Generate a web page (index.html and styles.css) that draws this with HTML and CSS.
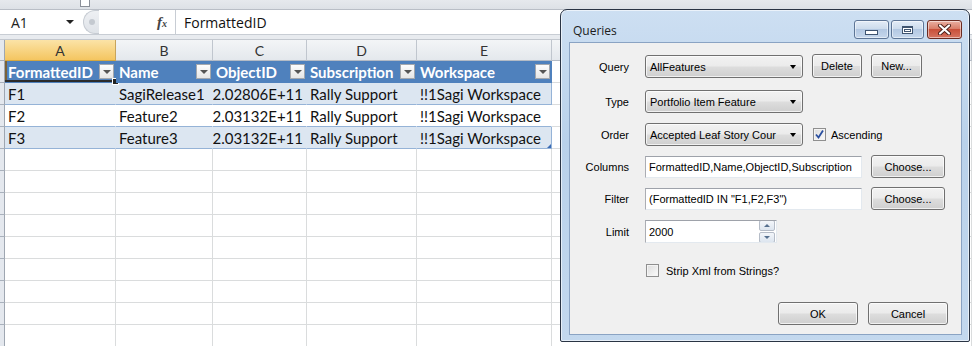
FILE: index.html
```html
<!DOCTYPE html>
<html lang="en">
<head>
  <meta charset="UTF-8" />
  <title>Queries</title>
  <link rel="stylesheet" href="styles.css">
</head>
<body>

  <div class="excel">
    <div class="ribbon-edge"><span class="grip"></span></div>

    <div class="formula-bar">
      <div class="name-box">A1<span class="caret"></span></div>
      <div class="splitter"><span></span></div>
      <div class="fx">f<sub>x</sub></div>
      <div class="formula">FormattedID</div>
    </div>
    <div class="bar-gap"></div>

    <!-- column letters -->
    <div class="row col-heads">
      <i></i><b class="active">A</b><b>B</b><b>C</b><b>D</b><b>E</b><b></b>
    </div>

    <!-- table header -->
    <div class="row tbl-head">
      <i></i>
      <div class="th selected">FormattedID<span class="filter"></span><span class="handle"></span></div>
      <div class="th">Name<span class="filter"></span></div>
      <div class="th">ObjectID<span class="filter"></span></div>
      <div class="th">Subscription<span class="filter"></span></div>
      <div class="th">Workspace<span class="filter"></span></div>
      <div></div>
    </div>

    <div class="row band">
      <i></i><div>F1</div><div>SagiRelease1</div><div class="num">2.02806E+11</div><div>Rally Support</div><div>!!1Sagi Workspace</div><div></div>
    </div>
    <div class="row band plain">
      <i></i><div>F2</div><div>Feature2</div><div class="num">2.03132E+11</div><div>Rally Support</div><div>!!1Sagi Workspace</div><div></div>
    </div>
    <div class="row band">
      <i></i><div>F3</div><div>Feature3</div><div class="num">2.03132E+11</div><div>Rally Support</div><div class="last">!!1Sagi Workspace</div><div></div>
    </div>

    <div class="row"><i></i><div></div><div></div><div></div><div></div><div></div><div></div></div>
    <div class="row"><i></i><div></div><div></div><div></div><div></div><div></div><div></div></div>
    <div class="row"><i></i><div></div><div></div><div></div><div></div><div></div><div></div></div>
    <div class="row"><i></i><div></div><div></div><div></div><div></div><div></div><div></div></div>
    <div class="row"><i></i><div></div><div></div><div></div><div></div><div></div><div></div></div>
    <div class="row"><i></i><div></div><div></div><div></div><div></div><div></div><div></div></div>
    <div class="row"><i></i><div></div><div></div><div></div><div></div><div></div><div></div></div>
    <div class="row"><i></i><div></div><div></div><div></div><div></div><div></div><div></div></div>
    <div class="row"><i></i><div></div><div></div><div></div><div></div><div></div><div></div></div>
  </div>

  <!-- Queries dialog window -->
  <div class="dialog">
    <div class="titlebar">
      <span class="title">Queries</span>
      <span class="win-btn min"><span></span></span>
      <span class="win-btn max"><span></span></span>
      <span class="win-btn close">
        <svg width="15" height="11" viewBox="0 0 15 11"><path d="M3 1.5 L12 9.5 M12 1.5 L3 9.5" stroke="#4a1e17" stroke-width="4" stroke-linecap="round"/><path d="M3 1.5 L12 9.5 M12 1.5 L3 9.5" stroke="#fff" stroke-width="2.2" stroke-linecap="round"/></svg>
      </span>
    </div>

    <div class="client">
      <div class="field r-query">
        <label>Query</label>
        <div class="combo">AllFeatures<span class="arrow"></span></div>
        <div class="btn w-del">Delete</div>
        <div class="btn w-new">New...</div>
      </div>
      <div class="field r-type">
        <label>Type</label>
        <div class="combo">Portfolio Item Feature<span class="arrow"></span></div>
      </div>
      <div class="field r-order">
        <label>Order</label>
        <div class="combo">Accepted Leaf Story Cour<span class="arrow"></span></div>
        <span class="check on">
          <svg width="11" height="11" viewBox="0 0 11 11"><path d="M2 5.5 L4.5 8.5 L9 1.5" fill="none" stroke="#2a4fa0" stroke-width="1.8"/></svg>
        </span>
        <span class="check-text">Ascending</span>
      </div>
      <div class="field r-cols">
        <label>Columns</label>
        <div class="textbox wide">FormattedID,Name,ObjectID,Subscription</div>
        <div class="btn w-choose">Choose...</div>
      </div>
      <div class="field r-filter">
        <label>Filter</label>
        <div class="textbox wide">(FormattedID IN "F1,F2,F3")</div>
        <div class="btn w-choose">Choose...</div>
      </div>
      <div class="field r-limit">
        <label>Limit</label>
        <div class="textbox spin-box">2000
          <span class="spin">
            <span class="up"></span>
            <span class="down"></span>
          </span>
        </div>
      </div>
      <div class="field r-strip">
        <label></label>
        <span class="check"></span>
        <span class="check-text">Strip Xml from Strings?</span>
      </div>
      <div class="actions">
        <div class="btn w-ok">OK</div>
        <div class="btn w-cancel">Cancel</div>
      </div>
    </div>
  </div>

</body>
</html>
```

FILE: styles.css
```css
body {
  margin: 0;
  width: 972px;
  height: 346px;
  overflow: hidden;
  position: relative;
  background: #fff;
  font-family: Lato, "Open Sans", sans-serif;
}

/* ---------- spreadsheet ---------- */

.excel {
  height: 346px;
  overflow: hidden;
}

.ribbon-edge {
  height: 9px;
  background: linear-gradient(#e6e9ed, #dde1e6);
  border-bottom: 1px solid #b9bec6;
  padding-left: 80px;
}

.grip {
  display: block;
  width: 8px;
  height: 6px;
  background: #fff;
  border: 1px solid #8b9099;
  border-top: none;
}

.formula-bar {
  display: flex;
  align-items: center;
  height: 24px;
  background: #fff;
  border-bottom: 1px solid #c8cdd4;
}

.name-box {
  width: 72px;
  padding-left: 11px;
  display: flex;
  align-items: center;
  font-family: "Open Sans", sans-serif;
  font-size: 14px;
  color: #222;
}

.caret {
  margin-left: auto;
  margin-right: 9px;
  border-left: 4px solid transparent;
  border-right: 4px solid transparent;
  border-top: 4px solid #222;
}

.splitter {
  width: 16px;
  height: 24px;
  border-radius: 12px 0 0 12px;
  background: linear-gradient(#eef0f3, #dfe3e8);
  border: 1px solid #c6cbd2;
  border-right: none;
  box-sizing: border-box;
  display: flex;
  align-items: center;
  justify-content: center;
}

.splitter span {
  width: 6px;
  height: 6px;
  border-radius: 50%;
  background: #c4c9d0;
}

.fx {
  margin-left: 58px;
  width: 18px;
  font-family: "Liberation Serif", serif;
  font-style: italic;
  font-weight: bold;
  font-size: 15px;
  color: #444;
}

.fx sub {
  font-size: 10px;
  vertical-align: baseline;
}

.formula {
  flex: 1;
  height: 24px;
  border-left: 1px solid #c8cdd4;
  padding-left: 8px;
  display: flex;
  align-items: center;
  font-family: "Open Sans", sans-serif;
  font-size: 14px;
  color: #111;
}

.bar-gap {
  height: 4px;
  background: #e8ebef;
  border-bottom: 1px solid #c3c8cf;
}

.row {
  display: grid;
  grid-template-columns: 5px 111px 97px 94px 110px 135px 1fr;
  height: 22px;
  font-size: 15px;
}

.row > * {
  box-sizing: border-box;
  border-right: 1px solid #dadcdd;
  border-bottom: 1px solid #dadcdd;
  padding-left: 3px;
  display: flex;
  align-items: center;
  white-space: nowrap;
  overflow: hidden;
  color: #111;
}

.row > i {
  padding: 0;
  background: #e4e8ee;
  border-right: 1px solid #9ea6b1;
  border-bottom: 1px solid #a9b1bc;
}

.col-heads {
  height: 21px;
}

.col-heads > b {
  font-weight: normal;
  font-size: 14px;
  color: #333;
  justify-content: center;
  padding: 0;
  background: linear-gradient(#f3f5f7, #e4e8ed);
  border-right: 1px solid #c0c6ce;
  border-bottom: 1px solid #b4bbc5;
}

.col-heads > b.active {
  background: linear-gradient(#fbe3a7, #f4c560);
  border-right-color: #c7a45c;
  border-bottom-color: #d5a740;
}

.tbl-head .th {
  background: #4f81bd;
  color: #fff;
  font-weight: bold;
  border-right: none;
  border-bottom: 1px solid #4f81bd;
  position: relative;
}

.filter {
  margin-left: auto;
  margin-right: 2px;
  width: 15px;
  height: 15px;
  box-sizing: border-box;
  background: linear-gradient(#fdfdfd, #e6e6e6);
  border: 1px solid #a4a8ae;
  display: flex;
  align-items: center;
  justify-content: center;
  flex-shrink: 0;
}

.filter::after {
  content: "";
  border-left: 4px solid transparent;
  border-right: 4px solid transparent;
  border-top: 4px solid #555;
}

.th.selected {
  box-shadow: inset 0 -2px 0 #2b2b2b, inset 2px 0 0 #7a6237;
  overflow: visible;
}

.handle {
  position: absolute;
  right: -3px;
  bottom: -3px;
  width: 5px;
  height: 5px;
  background: #222;
  border: 1px solid #fff;
}

.band > div:nth-child(-n+6) {
  background: #dce6f1;
  border-bottom: 1px solid #95b3d7;
  border-right-color: #dce6f1;
}

.band.plain > div:nth-child(-n+6) {
  background: #fff;
  border-right-color: #fff;
}

.band > div:nth-child(6) {
  border-right: 1px solid #95b3d7;
}

.band > .num {
  justify-content: flex-end;
  padding-right: 3px;
}

.band > .last {
  position: relative;
  overflow: visible;
}

.band > .last::after {
  content: "";
  position: absolute;
  right: 0;
  bottom: 0;
  border-left: 4px solid transparent;
  border-bottom: 4px solid #3a6bb5;
}

/* ---------- dialog ---------- */

.dialog {
  position: absolute;
  left: 560px;
  top: 9px;
  width: 410px;
  height: 333px;
  box-sizing: border-box;
  border: 1px solid #2a3444;
  border-radius: 7px 7px 2px 2px;
  background: linear-gradient(#cddff2, #b9d1ea 40%, #c3d8ee);
  padding: 0 7px 6px 8px;
  font-family: "Liberation Sans", Arial, sans-serif;
  font-size: 11px;
  color: #000;
  box-shadow: inset 0 0 0 1px rgba(255,255,255,0.6);
}

.titlebar {
  height: 32px;
  display: flex;
  align-items: flex-start;
  padding-top: 10px;
  box-sizing: border-box;
}

.title {
  margin-left: 4px;
  margin-top: 2px;
  font-family: "Open Sans", sans-serif;
  font-size: 12px;
  color: #1c1c1c;
  flex: 1;
}

.win-btn {
  height: 19px;
  box-sizing: border-box;
  border: 1px solid #5d7596;
  border-radius: 3px;
  background: linear-gradient(#e3ecf7, #cddced 45%, #b3c8e2 50%, #c6d7ec);
  box-shadow: inset 0 0 0 1px rgba(255,255,255,0.5);
  display: flex;
  align-items: center;
  justify-content: center;
  margin-left: 2px;
}

.win-btn.min { width: 35px; }
.win-btn.max { width: 33px; }
.win-btn.close {
  width: 35px;
  margin-left: 3px;
  border-color: #6b2b21;
  background: linear-gradient(#eab0a2, #d97f6a 45%, #c9503a 50%, #d67561);
}

.min span {
  width: 11px;
  height: 3px;
  margin-top: 5px;
  background: #fff;
  border: 1px solid #3f5470;
}

.max span {
  width: 9px;
  height: 5px;
  border: 1px solid #3f5470;
  border-top-width: 2px;
  background: #fff;
  box-shadow: inset 0 0 0 1px #fff, inset 0 0 0 2px #3f5470;
}

.client {
  height: 293px;
  box-sizing: border-box;
  background: #f0f0f0;
  border: 1px solid #8aa3c3;
  display: flex;
  flex-direction: column;
}

.field {
  display: flex;
  align-items: center;
  height: 23px;
}

.field label {
  width: 59px;
  text-align: right;
  margin-right: 16px;
}

.r-query { margin-top: 12px; }
.r-type { margin-top: 12px; }
.r-order { margin-top: 10px; }
.r-cols { margin-top: 9px; }
.r-filter { margin-top: 9px; }
.r-limit { margin-top: 10px; }
.r-strip { margin-top: 16px; }

.combo,
.btn {
  height: 23px;
  box-sizing: border-box;
  border: 1px solid #707070;
  border-radius: 3px;
  background: linear-gradient(#f2f2f2, #ebebeb 48%, #dddddd 52%, #cfcfcf);
  box-shadow: inset 0 0 0 1px rgba(255,255,255,0.7);
  display: flex;
  align-items: center;
}

.combo {
  width: 158px;
  padding-left: 4px;
  white-space: nowrap;
  overflow: hidden;
}

.arrow {
  margin-left: auto;
  margin-right: 6px;
  border-left: 3.5px solid transparent;
  border-right: 3.5px solid transparent;
  border-top: 4px solid #000;
  flex-shrink: 0;
}

.btn {
  justify-content: center;
  margin-left: 9px;
}

.w-del { width: 50px; height: 24px; margin-top: -2px; }
.w-new { width: 51px; height: 24px; margin-top: -2px; }
.w-choose { width: 74px; }
.w-ok { width: 80px; }
.w-cancel { width: 80px; margin-left: 10px; }

.textbox {
  height: 22px;
  box-sizing: border-box;
  background: #fff;
  border: 1px solid #abadb3;
  border-top-color: #9ea2aa;
  border-right-color: #e3e9ef;
  border-bottom-color: #e3e9ef;
  padding-left: 3px;
  display: flex;
  align-items: center;
  white-space: nowrap;
  overflow: hidden;
}

.textbox.wide { width: 217px; }

.spin-box {
  width: 132px;
  height: 23px;
  padding-right: 1px;
}

.spin {
  margin-left: auto;
  width: 16px;
  display: flex;
  flex-direction: column;
  gap: 1px;
}

.spin span {
  height: 9px;
  border: 1px solid #b5bcc7;
  border-radius: 2px;
  background: linear-gradient(#f3f6fa, #dde5ef);
  display: flex;
  align-items: center;
  justify-content: center;
}

.spin .up::after {
  content: "";
  border-left: 3px solid transparent;
  border-right: 3px solid transparent;
  border-bottom: 3px solid #56708f;
}

.spin .down::after {
  content: "";
  border-left: 3px solid transparent;
  border-right: 3px solid transparent;
  border-top: 3px solid #56708f;
}

.check {
  width: 13px;
  height: 13px;
  box-sizing: border-box;
  border: 1px solid #8f8f8f;
  background: linear-gradient(135deg, #dcdcdc, #fbfbfb);
  box-shadow: inset 0 0 0 1px #f4f4f4;
  display: flex;
  align-items: center;
  justify-content: center;
}

.r-order .check { margin-left: 10px; }
.r-strip .check { margin-left: 1px; }

.check-text {
  margin-left: 5px;
  white-space: nowrap;
}

.r-strip .check-text { margin-left: 7px; }

.actions {
  display: flex;
  justify-content: flex-end;
  margin-top: 20px;
  padding-right: 13px;
}

.actions .btn { height: 23px; }
```
